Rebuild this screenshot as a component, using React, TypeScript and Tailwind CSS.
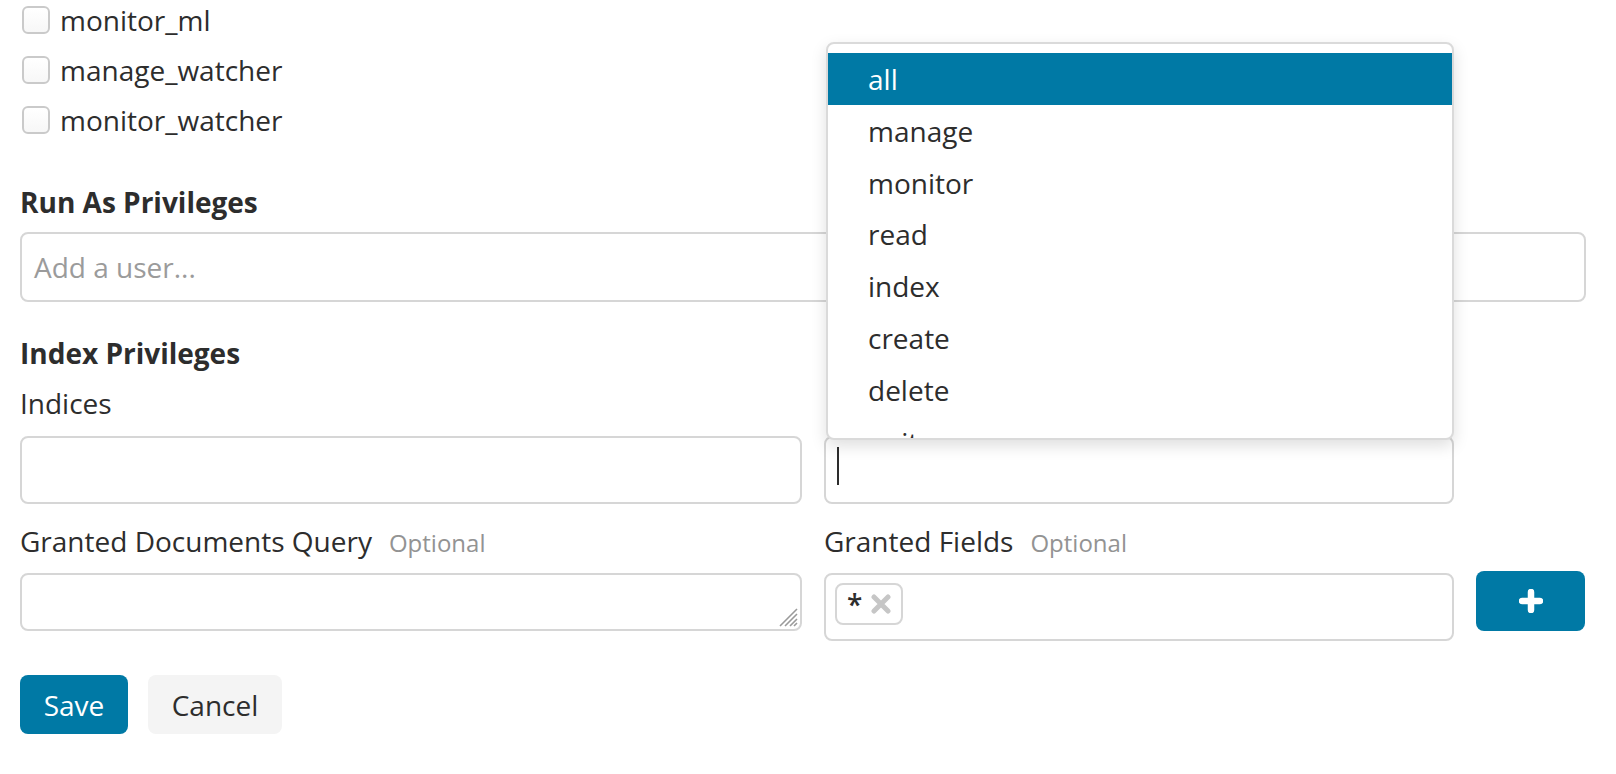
const clusterPrivs = ["monitor_ml", "manage_watcher", "monitor_watcher"];

const indexPrivs = [
  "all",
  "manage",
  "monitor",
  "read",
  "index",
  "create",
  "delete",
  "write",
  "delete_index",
  "create_index",
];

function Checkbox() {
  return (
    <span className="ml-[2px] block h-[28px] w-[28px] rounded-[6px] border-2 border-[#cacaca] bg-gradient-to-b from-white to-[#f7f7f7]" />
  );
}

function PlusIcon() {
  return (
    <svg width="24" height="24" viewBox="0 0 24 24">
      <path d="M12 3v18M3 12h18" stroke="white" strokeWidth="6.5" strokeLinecap="round" />
    </svg>
  );
}

function CrossIcon() {
  return (
    <svg width="20" height="20" viewBox="0 0 20 20">
      <path d="M3 3l14 14M17 3L3 17" stroke="#c6c6c6" strokeWidth="5" strokeLinecap="round" />
    </svg>
  );
}

function Grip() {
  return (
    <svg width="22" height="22" viewBox="0 0 22 22" className="absolute bottom-[2px] right-[2px]">
      <path d="M4 21L21 4M9 21L21 9M14 21L21 14M18 21L21 18" stroke="#9a9a9a" strokeWidth="1.6" />
    </svg>
  );
}

export default function App() {
  return (
    <div className="min-h-screen bg-white pl-[20px] pr-[30px] font-['Open_Sans',sans-serif] text-[28px] leading-[40px] text-[#2d2d2d]">
      {/* Cluster privileges (tail of list) */}
      <div className="flex flex-col gap-[10px]">
        {clusterPrivs.map((p) => (
          <label key={p} className="flex h-[40px] items-center gap-[10px]">
            <Checkbox />
            <span>{p}</span>
          </label>
        ))}
      </div>

      {/* Run as */}
      <h3 className="mt-[42px] font-bold">Run As Privileges</h3>
      <div className="mt-[10px] flex h-[70px] w-full items-center rounded-[8px] border-2 border-[#d6d6d6] px-[12px]">
        <span className="text-[#9b9b9b]">Add a user...</span>
      </div>

      {/* Index privileges */}
      <h3 className="mt-[31px] font-bold">Index Privileges</h3>
      <div className="mt-[10px]">Indices</div>

      <div className="mt-[13px] grid grid-cols-[782px_630px_109px] gap-x-[22px]">
        <div className="h-[68px] rounded-[8px] border-2 border-[#d6d6d6]" />
        <div className="relative h-[68px] rounded-[8px] border-2 border-[#d6d6d6]">
          <span className="absolute left-[11px] top-[9px] h-[38px] w-[2px] bg-[#2d2d2d]" />

          {/* open privileges menu */}
          <div className="absolute left-[0px] top-[-396px] z-10 h-[398px] w-[628px] overflow-hidden rounded-[8px] border-2 border-[#dadada] bg-white pt-[9px] shadow-[0_6px_16px_rgba(0,0,0,0.13)]">
            {indexPrivs.map((p, i) => (
              <div
                key={p}
                className={
                  i === 0
                    ? "h-[51.8px] bg-[#0079a5] py-[6px] pl-[40px] text-white"
                    : "h-[51.8px] py-[6px] pl-[40px]"
                }
              >
                {p}
              </div>
            ))}
          </div>
        </div>
        <div />
      </div>

      <div className="mt-[17px] grid grid-cols-[782px_630px_109px] gap-x-[22px]">
        <div>
          <div className="flex items-baseline">
            <span>Granted Documents Query</span>
            <span className="ml-[17px] text-[24px] text-[#939393]">Optional</span>
          </div>
          <div className="relative mt-[10px] h-[58px] rounded-[8px] border-2 border-[#d6d6d6]">
            <Grip />
          </div>
        </div>
        <div>
          <div className="flex items-baseline">
            <span>Granted Fields</span>
            <span className="ml-[17px] text-[24px] text-[#939393]">Optional</span>
          </div>
          <div className="mt-[10px] h-[68px] rounded-[8px] border-2 border-[#d6d6d6] pl-[9px] pt-[8px]">
            <span className="flex h-[42px] w-[68px] items-center gap-[9px] rounded-[8px] border-2 border-[#d6d6d6] pl-[10px]">
              <span className="font-semibold">*</span>
              <CrossIcon />
            </span>
          </div>
        </div>
        <div className="pt-[50px]">
          <button className="flex h-[60px] w-full items-center justify-center rounded-[8px] bg-[#0079a5]">
            <PlusIcon />
          </button>
        </div>
      </div>

      <div className="mt-[34px] flex gap-[20px]">
        <button className="h-[59px] w-[108px] rounded-[8px] bg-[#0079a5] text-white">Save</button>
        <button className="h-[59px] w-[134px] rounded-[8px] bg-[#f4f4f4] text-[#2d2d2d]">Cancel</button>
      </div>
    </div>
  );
}
